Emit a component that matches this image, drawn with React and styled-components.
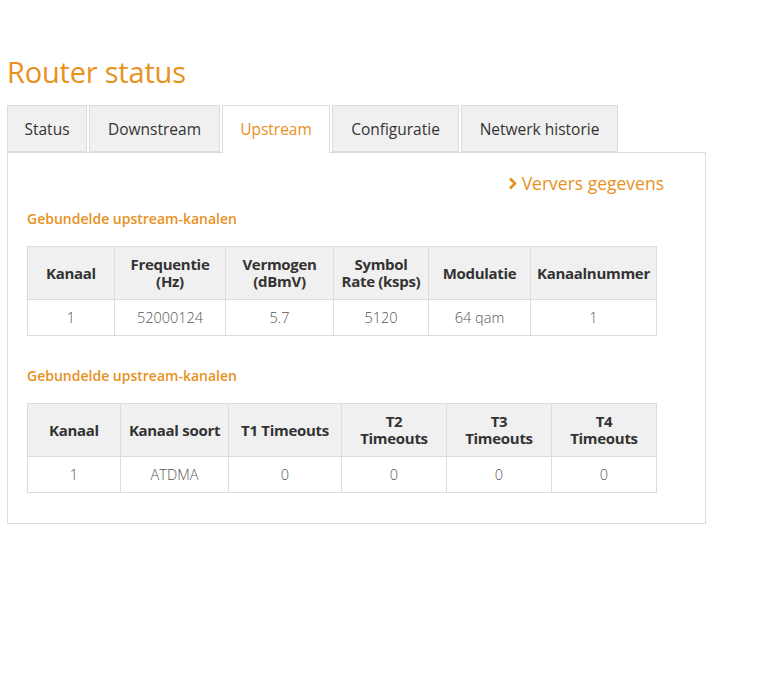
import React from 'react';
import styled, { createGlobalStyle } from 'styled-components';

const orange = '#e8911c';

const GlobalStyle = createGlobalStyle`
	body {
		margin: 0;
		padding: 0;
		background: #ffffff;
		font-family: 'Open Sans', 'Liberation Sans', sans-serif;
		color: #333333;
	}
`;

const Page = styled.div`
	padding: 55px 0 0 7px;
	width: 699px;
`;

const Title = styled.h1`
	margin: 0 0 16px;
	font-size: 29px;
	font-weight: 400;
	line-height: 34px;
	color: ${orange};
	letter-spacing: -0.2px;
`;

const Tabs = styled.div`
	display: flex;
	gap: 2px;
	margin-bottom: -1px;
	position: relative;
`;

const Tab = styled.div`
	box-sizing: border-box;
	width: ${p => p.w}px;
	height: ${p => (p.active ? 48 : 47)}px;
	display: flex;
	align-items: center;
	justify-content: center;
	font-size: 15.5px;
	color: ${p => (p.active ? orange : '#333333')};
	background: ${p => (p.active ? '#ffffff' : '#f0f0f0')};
	border: 1px solid #dcdcdc;
	border-bottom: ${p => (p.active ? 'none' : '1px solid #dcdcdc')};
	padding-bottom: ${p => (p.active ? 1 : 0)}px;
`;

const Panel = styled.div`
	box-sizing: border-box;
	border: 1px solid #dcdcdc;
	padding: 18px 20px 30px 19px;
`;

const Refresh = styled.div`
	display: flex;
	justify-content: flex-end;
	align-items: center;
	gap: 5px;
	padding-right: 21px;
	font-size: 17.5px;
	color: ${orange};
	margin-bottom: 14px;
`;

const SectionTitle = styled.h2`
	margin: 0 0 17px;
	font-size: 14px;
	font-weight: 600;
	color: ${orange};
	line-height: 20px;
`;

const Table = styled.table`
	border-collapse: collapse;
	width: 630px;
	margin-bottom: 30px;
	&:last-child {
		margin-bottom: 0;
	}
	th, td {
		border: 1px solid #dcdcdc;
		text-align: center;
		padding: 0 6px;
	}
	th {
		background: #f0f0f0;
		height: 52px;
		font-size: 15px;
		font-weight: 700;
		line-height: 17px;
		color: #333333;
		letter-spacing: -0.3px;
	}
	td {
		height: 35px;
		font-size: 14.5px;
		font-weight: 300;
		color: #555555;
	}
`;

const Chevron = () => (
	<svg width="9" height="13" viewBox="0 0 9 13">
		<path d="M2 1.5 L7 6.5 L2 11.5" fill="none" stroke={orange} strokeWidth="2.6" />
	</svg>
);

const tabs = [
	{ label: 'Status', w: 80 },
	{ label: 'Downstream', w: 131 },
	{ label: 'Upstream', w: 108, active: true },
	{ label: 'Configuratie', w: 127 },
	{ label: 'Netwerk historie', w: 157 },
];

const table1 = {
	widths: [87, 111, 108, 95, 102, 126],
	head: ['Kanaal', <>Frequentie<br />(Hz)</>, <>Vermogen<br />(dBmV)</>, <>Symbol<br />Rate (ksps)</>, 'Modulatie', 'Kanaalnummer'],
	row: ['1', '52000124', '5.7', '5120', '64 qam', '1'],
};

const table2 = {
	widths: [93, 108, 113, 105, 105, 105],
	head: ['Kanaal', 'Kanaal soort', 'T1 Timeouts', <>T2<br />Timeouts</>, <>T3<br />Timeouts</>, <>T4<br />Timeouts</>],
	row: ['1', 'ATDMA', '0', '0', '0', '0'],
};

function DataTable({ data }) {
	return (
		<Table>
			<colgroup>
				{data.widths.map((w, i) => <col key={i} style={{ width: w }} />)}
			</colgroup>
			<thead>
				<tr>{data.head.map((h, i) => <th key={i}>{h}</th>)}</tr>
			</thead>
			<tbody>
				<tr>{data.row.map((c, i) => <td key={i}>{c}</td>)}</tr>
			</tbody>
		</Table>
	);
}

export default function App() {
	return (
		<>
			<GlobalStyle />
			<Page>
				<Title>Router status</Title>
				<Tabs>
					{tabs.map(t => (
						<Tab key={t.label} w={t.w} active={t.active}>{t.label}</Tab>
					))}
				</Tabs>
				<Panel>
					<Refresh><Chevron />Ververs gegevens</Refresh>
					<SectionTitle>Gebundelde upstream-kanalen</SectionTitle>
					<DataTable data={table1} />
					<SectionTitle>Gebundelde upstream-kanalen</SectionTitle>
					<DataTable data={table2} />
				</Panel>
			</Page>
		</>
	);
}
